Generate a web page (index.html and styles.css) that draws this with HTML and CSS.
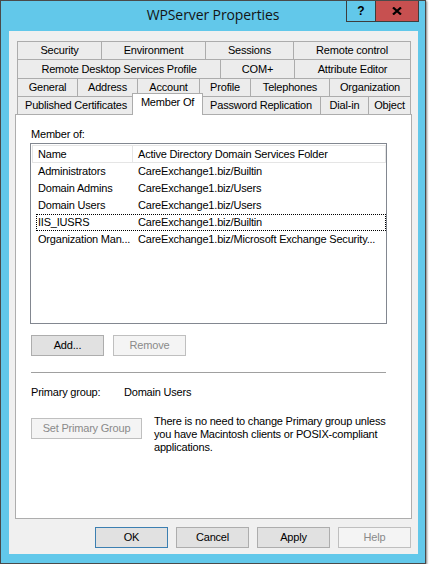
FILE: index.html
```html
<!DOCTYPE html>
<html>
<head>
<meta charset="utf-8">
<link rel="stylesheet" href="styles.css">
</head>
<body>
<div class="window">
  <div class="titlebar">
    <div class="title">WPServer Properties</div>
    <div class="caption">
      <div class="cap-help">?</div>
      <div class="cap-close">
        <svg width="10" height="8" viewBox="0 0 10 8"><path d="M1 0.5 L9 7.5 M9 0.5 L1 7.5" stroke="#000" stroke-width="2.2" fill="none"/></svg>
      </div>
    </div>
  </div>
  <div class="client">
    <div class="tabs">
      <div class="tabrow r1">
        <div class="tab">Security</div>
        <div class="tab">Environment</div>
        <div class="tab">Sessions</div>
        <div class="tab">Remote control</div>
      </div>
      <div class="tabrow r2">
        <div class="tab">Remote Desktop Services Profile</div>
        <div class="tab">COM+</div>
        <div class="tab">Attribute Editor</div>
      </div>
      <div class="tabrow r3">
        <div class="tab">General</div>
        <div class="tab">Address</div>
        <div class="tab">Account</div>
        <div class="tab">Profile</div>
        <div class="tab">Telephones</div>
        <div class="tab">Organization</div>
      </div>
      <div class="tabrow r4">
        <div class="tab">Published Certificates</div>
        <div class="tab sel">Member Of</div>
        <div class="tab">Password Replication</div>
        <div class="tab">Dial-in</div>
        <div class="tab">Object</div>
      </div>
    </div>
    <div class="panel">
      <div class="label">Member of:</div>
      <div class="list">
        <div class="lhead">
          <div class="hcell">Name</div>
          <div class="hcell h2">Active Directory Domain Services Folder</div>
        </div>
        <div class="lrow"><div>Administrators</div><div>CareExchange1.biz/Builtin</div></div>
        <div class="lrow"><div>Domain Admins</div><div>CareExchange1.biz/Users</div></div>
        <div class="lrow"><div>Domain Users</div><div>CareExchange1.biz/Users</div></div>
        <div class="lrow focus"><div>IIS_IUSRS</div><div>CareExchange1.biz/Builtin</div></div>
        <div class="lrow"><div>Organization Man...</div><div>CareExchange1.biz/Microsoft Exchange Security...</div></div>
      </div>
      <div class="btnrow">
        <button class="btn">Add...</button>
        <button class="btn dis">Remove</button>
      </div>
      <div class="sep"></div>
      <div class="prow">
        <div class="plabel">Primary group:</div>
        <div>Domain Users</div>
      </div>
      <div class="setrow">
        <button class="btn dis setbtn">Set Primary Group</button>
        <p class="note">There is no need to change Primary group unless<br>you have Macintosh clients or POSIX-compliant<br>applications.</p>
      </div>
    </div>
    <div class="footer">
      <button class="btn def">OK</button>
      <button class="btn">Cancel</button>
      <button class="btn">Apply</button>
      <button class="btn dis">Help</button>
    </div>
  </div>
</div>
</body>
</html>
```
FILE: styles.css
```css
* { box-sizing: border-box; }
html, body { margin: 0; padding: 0; background: #fff; }
body {
  font-family: "Liberation Sans", Arial, sans-serif;
  font-size: 11px;
  line-height: 13px;
  letter-spacing: -0.2px;
  color: #000;
}
.window {
  width: 426px;
  height: 564px;
  background: #62c8ea;
  border: 1px solid #4a4a4a;
  box-shadow: 1px 1px 2px rgba(0,0,0,0.5);
  display: flex;
  flex-direction: column;
}
.titlebar {
  height: 30px;
  flex: none;
  display: grid;
  grid-template-columns: 1fr auto 1fr;
  align-items: start;
}
.title {
  grid-column: 2;
  font-family: "Open Sans", "Noto Sans", sans-serif;
  font-size: 14px;
  line-height: 19px;
  letter-spacing: -0.1px;
  margin-top: 4px;
  color: #141414;
  white-space: nowrap;
}
.caption {
  grid-column: 3;
  justify-self: end;
  margin-right: 6px;
  display: flex;
  height: 21px;
  border: 1px solid #3d3d3d;
  border-top: none;
}
.cap-help {
  width: 28px;
  display: flex;
  align-items: center;
  justify-content: center;
  font-weight: bold;
  font-size: 12px;
  letter-spacing: 0;
  color: #000;
}
.cap-close {
  width: 43px;
  border-left: 1px solid #3d3d3d;
  background: #c75050;
  display: flex;
  align-items: center;
  justify-content: center;
}
.client {
  margin: 0 7px 0 8px;
  height: 523px;
  background: #f0f0f0;
  padding: 10px 6px 0 6px;
}
.tabs { margin: 0 1px 0 2px; }
.tabrow { display: grid; }
.r1 { grid-template-columns: 84px 104px 88px 1fr; height: 18px; }
.r2 { grid-template-columns: 203px 74px 1fr; height: 19px; }
.r3 { grid-template-columns: 60px 60px 62px 51px 79px 1fr; height: 18px; }
.r4 { grid-template-columns: 117px 67px 119px 48px 1fr; height: 18px; }
.tab {
  background: #ececec;
  border-top: 1px solid #acacac;
  border-left: 1px solid #acacac;
  text-align: center;
  white-space: nowrap;
  line-height: 17px;
  overflow: hidden;
}
.tab:last-child { border-right: 1px solid #acacac; }
.r2 .tab { line-height: 18px; }
.tab.sel {
  background: #fff;
  margin: -3px -2px -1px -2px;
  position: relative;
  z-index: 1;
  border: 1px solid #acacac;
  border-bottom: none;
  line-height: 17px;
}
.panel {
  height: 405px;
  background: #fff;
  border: 1px solid #adadad;
  padding: 13px 0 0 15px;
}
.label { height: 13px; }
.list {
  margin-top: 2px;
  margin-left: -1px;
  width: 357px;
  height: 181px;
  border: 1px solid #828790;
  background: #fff;
  overflow: hidden;
}
.lhead {
  margin: 1px 0 0 1px;
  display: grid;
  grid-template-columns: 101px 1fr;
  height: 18px;
}
.hcell {
  border: 1px solid #e5e5e5;
  padding-left: 5px;
  line-height: 16px;
  white-space: nowrap;
  overflow: hidden;
}
.hcell.h2 { border-left: none; }
.lrow {
  margin-left: 5px;
  display: grid;
  grid-template-columns: 100px 1fr;
  height: 17px;
  border: 1px solid transparent;
  padding-left: 1px;
  line-height: 15px;
  white-space: nowrap;
  overflow: hidden;
}
.lrow.focus { border: 1px dotted #000; }
.btnrow {
  margin-top: 11px;
  display: flex;
  gap: 9px;
}
.btn {
  width: 73px;
  height: 21px;
  padding: 0;
  margin: 0;
  border: 1px solid #adadad;
  background: #e1e1e1;
  font-family: inherit;
  font-size: 11px;
  line-height: 13px;
  letter-spacing: -0.2px;
  color: #000;
  display: flex;
  align-items: center;
  justify-content: center;
  border-radius: 0;
}
.btn.dis {
  background: #f4f4f4;
  border-color: #bfbfbf;
  color: #8a8a8a;
}
.btn.def { border-color: #3c7fb1; }
.sep {
  margin-top: 16px;
  width: 355px;
  height: 1px;
  background: #a0a0a0;
}
.prow {
  margin-top: 13px;
  display: flex;
}
.plabel { width: 93px; }
.setrow {
  margin-top: 16px;
  display: flex;
  align-items: flex-start;
}
.setbtn { width: 111px; margin-top: 3px; flex: none; }
.note {
  margin: 0 0 0 12px;
  line-height: 13px;
  white-space: nowrap;
}
.footer {
  margin-top: 8px;
  padding-right: 1px;
  display: flex;
  justify-content: flex-end;
  gap: 8px;
}
```
